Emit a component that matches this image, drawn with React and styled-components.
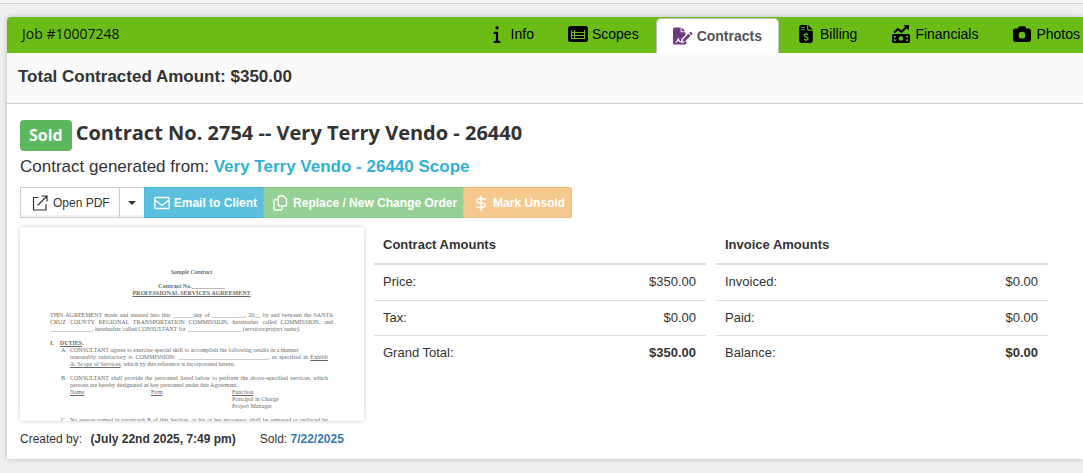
import React from "react";
import styled, { createGlobalStyle, css } from "styled-components";
import { FaInfo, FaCamera } from "react-icons/fa6";

const GlobalStyle = createGlobalStyle`
  *, *::before, *::after { box-sizing: border-box; }
  body {
    margin: 0;
    background: #efefef;
    color: #333;
    font: 13px/18px "Liberation Sans", Arial, sans-serif;
    overflow-x: hidden;
  }
`;

const TopBar = styled.div`
  height: 4px;
  background: #f5f5f7;
  border-bottom: 1px solid #d6d6da;
`;

const Page = styled.main`
  padding: 13px 0 14px 7px;
`;

const Card = styled.section`
  background: #fff;
  border-top-left-radius: 4px;
  box-shadow: 0 0 5px #bbb;
`;

const CardHeader = styled.header`
  display: flex;
  align-items: stretch;
  height: 36px;
  overflow: hidden;
  background: #6bbd15;
  border-top-left-radius: 4px;
`;

const JobTitle = styled.h1`
  flex: 1;
  margin: 0;
  padding-left: 15px;
  color: #111;
  font: 400 14px/34px "Open Sans", sans-serif;
  white-space: nowrap;
`;

const Tabs = styled.nav`
  display: flex;
`;

const Tab = styled.a`
  display: flex;
  align-items: center;
  gap: 4px;
  height: 34px;
  padding: 0 ${(p) => (p.$last ? 2 : 16)}px 1px 16px;
  border: 1px solid transparent;
  border-bottom: 0;
  color: #000;
  font-size: 14px;
  text-decoration: none;
  white-space: nowrap;
  ${(p) =>
    p.$active &&
    css`
      height: 35px;
      margin-top: 1px;
      background: #fff;
      border-color: #bdbdbd;
      border-radius: 5px 5px 0 0;
      color: #555;
      font-weight: 700;
    `}
`;

const TabIcon = styled.span`
  display: flex;
  justify-content: center;
  width: 20px;
`;

const Summary = styled.div`
  padding: 13px 11px 16px;
  background: #fafafa;
  border-bottom: 1px solid #ccc;
  font-size: 17px;
  font-weight: 700;
  line-height: 21px;
`;

const Body = styled.div`
  padding: 16px 35px 11px 13px;
`;

const TitleRow = styled.div`
  display: flex;
  align-items: flex-start;
  gap: 4px;
`;

const Badge = styled.span`
  padding: 0 9px;
  background: #5cb85c;
  border-radius: 4px;
  color: #fff;
  font: 700 16px/31px "Open Sans", sans-serif;
`;

const Title = styled.h2`
  margin: 0;
  font: 700 20px/26px "Open Sans", sans-serif;
`;

const Source = styled.p`
  margin: 5px 0 10px;
  font-size: 17px;
  line-height: 21px;
`;

const SourceLink = styled.a`
  color: #31b0d5;
  font-weight: 700;
  text-decoration: none;
`;

const Toolbar = styled.div`
  display: flex;
  margin-bottom: 9px;
`;

const tones = {
  plain: css`background: #fff; border-color: #ccc; color: #333; box-shadow: inset 0 -2px 0 rgba(0, 0, 0, 0.05);`,
  info: css`background: #5bc0de; border-color: #46b8da; color: #fff;`,
  success: css`background: #95d195; border-color: #87c887; color: #fff;`,
  warning: css`background: #f5c98d; border-color: #f1bf7c; color: #fff;`,
};

const buttonPadding = (p) => {
  if (p.$caret) return "0 8px";
  return p.$tone === "plain" ? "0 9px 0 11px" : "0 6px 0 9px";
};

const Button = styled.button`
  display: flex;
  align-items: center;
  justify-content: center;
  gap: ${(p) => (p.$tone === "plain" ? 5 : 4)}px;
  height: 31px;
  margin: 0 0 0 -1px;
  padding: ${buttonPadding};
  border: 1px solid;
  font-family: inherit;
  font-size: 12px;
  font-weight: ${(p) => (p.$tone === "plain" ? 400 : 700)};
  white-space: nowrap;
  cursor: pointer;
  ${(p) => tones[p.$tone]}
  &:first-child { margin-left: 0; }
  &:last-child { border-radius: 0 2px 2px 0; }
`;

const Caret = styled.span`
  border: 4px solid transparent;
  border-top-color: currentColor;
  border-bottom: 0;
`;

const Columns = styled.div`
  display: flex;
  align-items: flex-start;
  gap: 10px;
`;

const Preview = styled.article`
  flex: 0 0 344px;
  height: 194px;
  padding: 42px 31px 0 30px;
  overflow: hidden;
  border-radius: 4px;
  box-shadow: 0 0 4px #ccc;
  color: #6a6a6a;
  font: 6px/7px "Liberation Serif", serif;
`;

const DocLine = styled.p`
  margin: 0 0 ${(p) => p.$after || 0}px;
  text-align: ${(p) => p.$align || "left"};
  text-align-last: ${(p) => p.$align || "left"};
  font-weight: ${(p) => (p.$bold ? 700 : 400)};
  white-space: ${(p) => (p.$align === "justify" ? "normal" : "nowrap")};
`;

const DocItem = styled.div`
  display: grid;
  grid-template-columns: 9px 1fr;
  padding: 0 5px 0 11px;
  margin-bottom: 7px;
`;

const DocRoles = styled.div`
  display: grid;
  grid-template-columns: 81px 81px 1fr;
`;

const AmountsCell = styled.div`
  flex: 1;
`;

const Amounts = styled.table`
  width: 100%;
  border-collapse: collapse;
  font-size: 13px;
  th, td { padding: 8px 10px 8px 9px; text-align: left; }
  tbody th { font-weight: 400; }
  tbody td { text-align: right; }
  tbody tr { border-bottom: 1px solid #ddd; }
  tbody tr:first-child > * { padding-bottom: 9px; }
  tbody tr:last-child { border-bottom: 0; }
  tbody tr:last-child td { font-weight: 700; }
  thead th { padding: 9px; border-bottom: 2px solid #ddd; }
`;

const Meta = styled.footer`
  display: flex;
  gap: 24px;
  margin-top: 9px;
  font-size: 12px;
  strong { margin-left: 5px; }
`;

const DateLink = styled.a`
  color: #337ab7;
  font-weight: 700;
  text-decoration: none;
`;

const ListIcon = () => (
  <svg width="20" height="16" viewBox="0 0 20 16" aria-hidden="true">
    <rect width="20" height="16" rx="2.500" />
    <path d="M3 4h14v9H3z" fill="#6bbd15" />
    <path d="M4 4h2v2H4zM7 4h9v2H7zM4 7h2v2H4zM7 7h9v2H7zM4 10h2v2H4zM7 10h9v2H7z" />
  </svg>
);

const ContractIcon = () => (
  <svg width="21" height="18" viewBox="0 0 21 18" aria-hidden="true">
    <path d="M2 0h6v5h5v3l-4 4-1 4h3l3-2v2a2 2 0 0 1-2 2H2a2 2 0 0 1-2-2V2a2 2 0 0 1 2-2z" fill="#6f3a7b" />
    <path d="M9 0l4 4H9z" fill="#6f3a7b" />
    <path d="M2.500 15.500l1.500-.5 1.500-3 1.500 3h3" fill="none" stroke="#fff" strokeWidth="1.200" />
    <path d="M16.200 6.600l2.200 2.200-5.700 5.600-2.700.6.600-2.700z" fill="#6f3a7b" />
    <path d="M17 5.900l1-.9q.7-.5 1.300 0l.9.9q.5.700 0 1.300l-.9 1z" fill="#6f3a7b" />
  </svg>
);

const BillingIcon = () => (
  <svg width="14" height="18" viewBox="0 0 384 512" aria-hidden="true">
    <path d="M64 0C28.700 0 0 28.700 0 64V448c0 35.300 28.700 64 64 64H320c35.300 0 64-28.700 64-64V160H256c-17.700 0-32-14.300-32-32V0H64zM256 0V128H384L256 0z" />
    <path d="M56 64h104v24H56zM56 124h104v24H56z" fill="#6bbd15" />
    <path d="M252 274c-20-12-40-16-60-16-32 0-54 14-54 38 0 54 116 30 116 88 0 26-24 42-60 42-24 0-44-6-62-18M192 220v38M192 426v36" fill="none" stroke="#6bbd15" strokeWidth="34" />
  </svg>
);

const FinancialsIcon = () => (
  <svg width="18" height="18" viewBox="0 0 18 18" aria-hidden="true">
    <path d="M2 7.500l4-3.300 3.500 2.600L14.500 2" fill="none" stroke="#000" strokeWidth="2.200" />
    <path d="M11.500 0H17v5.500z" />
    <rect y="9" width="18" height="9" rx="1.500" />
    <path d="M2 11h2a2 2 0 0 1-2 2zM16 11h-2a2 2 0 0 0 2 2zM2 16h2a2 2 0 0 0-2-2zM16 16h-2a2 2 0 0 1 2-2z" fill="#6bbd15" />
    <circle cx="9" cy="13.500" r="2.300" fill="#6bbd15" />
  </svg>
);

const LineIcon = ({ d, stroke = 1.2 }) => (
  <svg width="16" height="16" viewBox="0 0 16 16" fill="none" stroke="currentColor" strokeWidth={stroke} strokeLinecap="round" strokeLinejoin="round" aria-hidden="true">
    <path d={d} />
  </svg>
);

const OPEN = "M6 2.500H1.500v12.500H14V9.500M10 1h5v5M15 1L6 10";
const MAIL = "M2 2.500h12q1.200 0 1.200 1.200v8.600q0 1.200-1.200 1.200H2q-1.200 0-1.200-1.200V3.700q0-1.200 1.200-1.200zM1 5l5.700 4.500q1.300 1 2.600 0L15 5";
const COPY = "M6.500 1h4l3 3v6q0 1-1 1h-6q-1.200 0-1.200-1V2q0-1 1.200-1zM5 4.500H2.200Q1 4.500 1 5.700v8q0 1.300 1.200 1.300h5.600Q9 15 9 13.700V11.500";
const DOLLAR = "M8 1v14M12.200 4.500Q11.200 3.200 8 3.200T3.800 5.500 8 8t4.200 2.500T8 12.800 3.800 11.500";

const tabs = [
  { label: "Info", icon: <FaInfo size={18} /> },
  { label: "Scopes", icon: <ListIcon /> },
  { label: "Contracts", icon: <ContractIcon />, active: true },
  { label: "Billing", icon: <BillingIcon /> },
  { label: "Financials", icon: <FinancialsIcon /> },
  { label: "Photos", icon: <FaCamera size={18} /> },
];

const contractRows = [["Price:", "$350.00"], ["Tax:", "$0.00"], ["Grand Total:", "$350.00"]];
const invoiceRows = [["Invoiced:", "$0.00"], ["Paid:", "$0.00"], ["Balance:", "$0.00"]];

const AmountTable = ({ title, rows }) => (
  <AmountsCell>
    <Amounts>
      <thead><tr><th colSpan={2}>{title}</th></tr></thead>
      <tbody>
        {rows.map(([label, value]) => (
          <tr key={label}><th scope="row">{label}</th><td>{value}</td></tr>
        ))}
      </tbody>
    </Amounts>
  </AmountsCell>
);

const ContractPreview = () => (
  <Preview>
    <DocLine $align="center" $bold $after={7}><i>Sample Contract</i></DocLine>
    <DocLine $align="center" $bold>Contract No.___________</DocLine>
    <DocLine $align="center" $bold $after={15}><u>PROFESSIONAL SERVICES AGREEMENT</u></DocLine>
    <DocLine $align="justify">THIS AGREEMENT made and entered into this _______day of ___________, 20__ by and between the SANTA</DocLine>
    <DocLine $align="justify">CRUZ COUNTY REGIONAL TRANSPORTATION COMMISSION, hereinafter called COMMISSION, and</DocLine>
    <DocLine $after={7}>______________, hereinafter called CONSULTANT for __________________ <i>(services/project name).</i></DocLine>
    <DocLine $bold>I. &nbsp; &nbsp;<u>DUTIES</u>.</DocLine>
    <DocItem>
      <span>A.</span>
      <div>
        <DocLine>CONSULTANT agrees to exercise special skill to accomplish the following results in a manner</DocLine>
        <DocLine $align="justify">reasonably satisfactory to COMMISSION: ______________________________, as specified in <u>Exhibit</u></DocLine>
        <DocLine><u>A: Scope of Services</u>, which by this reference is incorporated herein.</DocLine>
      </div>
    </DocItem>
    <DocItem>
      <span>B.</span>
      <div>
        <DocLine $align="justify">CONSULTANT shall provide the personnel listed below to perform the above-specified services, which</DocLine>
        <DocLine>persons are hereby designated as key personnel under this Agreement.</DocLine>
        <DocRoles>
          <u>Name</u><u>Firm</u>
          <div><u>Function</u><br />Principal in Charge<br />Project Manager</div>
        </DocRoles>
      </div>
    </DocItem>
    <DocItem>
      <span>C.</span>
      <DocLine $align="justify">No person named in paragraph B of this Section, or his or her successor, shall be removed or replaced by</DocLine>
    </DocItem>
  </Preview>
);

export default function App() {
  return (
    <>
      <GlobalStyle />
      <TopBar />
      <Page>
        <Card>
          <CardHeader>
            <JobTitle>Job #10007248</JobTitle>
            <Tabs>
              {tabs.map((t, i) => (
                <Tab key={t.label} href="#" $active={t.active} $last={i === tabs.length - 1}>
                  <TabIcon>{t.icon}</TabIcon>
                  {t.label}
                </Tab>
              ))}
            </Tabs>
          </CardHeader>
          <Summary>Total Contracted Amount: $350.00</Summary>
          <Body>
            <TitleRow>
              <Badge>Sold</Badge>
              <Title>Contract No. 2754 -- Very Terry Vendo - 26440</Title>
            </TitleRow>
            <Source>
              Contract generated from: <SourceLink href="#">Very Terry Vendo - 26440 Scope</SourceLink>
            </Source>
            <Toolbar>
              <Button $tone="plain"><LineIcon d={OPEN} />Open PDF</Button>
              <Button $tone="plain" $caret aria-label="More PDF options"><Caret /></Button>
              <Button $tone="info"><LineIcon d={MAIL} stroke={1.4} />Email to Client</Button>
              <Button $tone="success"><LineIcon d={COPY} stroke={1.4} />Replace / New Change Order</Button>
              <Button $tone="warning"><LineIcon d={DOLLAR} stroke={1.4} />Mark Unsold</Button>
            </Toolbar>
            <Columns>
              <ContractPreview />
              <AmountTable title="Contract Amounts" rows={contractRows} />
              <AmountTable title="Invoice Amounts" rows={invoiceRows} />
            </Columns>
            <Meta>
              <span>Created by: <strong>(July 22nd 2025, 7:49 pm)</strong></span>
              <span>Sold: <DateLink href="#">7/22/2025</DateLink></span>
            </Meta>
          </Body>
        </Card>
      </Page>
    </>
  );
}
